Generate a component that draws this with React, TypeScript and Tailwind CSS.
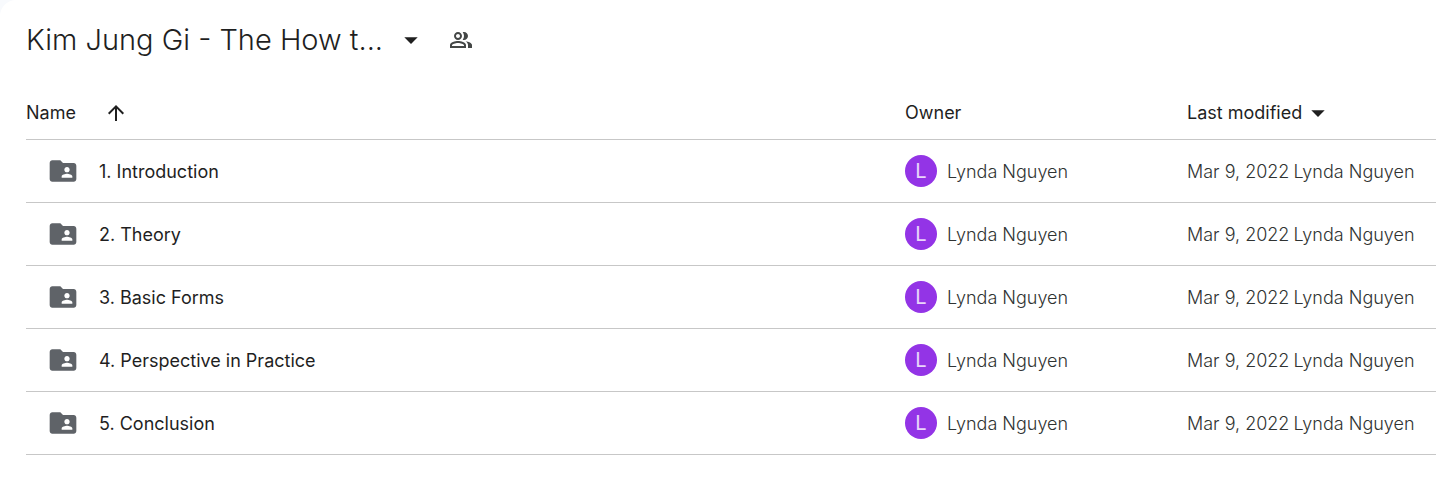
import { MdArrowDropDown, MdArrowUpward, MdFolderShared } from 'react-icons/md'

type Folder = {
  name: string
  owner: string
  modified: string
}

const folders: Folder[] = [
  { name: '1. Introduction', owner: 'Lynda Nguyen', modified: 'Mar 9, 2022' },
  { name: '2. Theory', owner: 'Lynda Nguyen', modified: 'Mar 9, 2022' },
  { name: '3. Basic Forms', owner: 'Lynda Nguyen', modified: 'Mar 9, 2022' },
  { name: '4. Perspective in Practice', owner: 'Lynda Nguyen', modified: 'Mar 9, 2022' },
  { name: '5. Conclusion', owner: 'Lynda Nguyen', modified: 'Mar 9, 2022' },
]

function PeopleIcon() {
  return (
    <svg className="w-6 h-6" viewBox="0 0 24 24" fill="currentColor" aria-hidden="true">
      <path d="M15 8c0-1.42-.5-2.73-1.33-3.76.42-.14.86-.24 1.33-.24 2.21 0 4 1.79 4 4s-1.79 4-4 4c-.43 0-.84-.09-1.23-.21-.03-.01-.06-.02-.1-.03A5.98 5.98 0 0 0 15 8zm1.66 5.13C18.03 14.06 19 15.32 19 17v3h4v-3c0-2.18-3.58-3.47-6.34-3.87zM9 6c-1.1 0-2 .9-2 2s.9 2 2 2 2-.9 2-2-.9-2-2-2zm0 9c-2.7 0-5.8 1.29-6 2.01V18h12v-1c-.2-.71-3.3-2-6-2zM9 4c2.21 0 4 1.79 4 4s-1.79 4-4 4-4-1.79-4-4 1.79-4 4-4zm0 9c2.67 0 8 1.34 8 4v3H1v-3c0-2.66 5.33-4 8-4z" />
    </svg>
  )
}

export default function App() {
  return (
    <div className="min-h-screen bg-[#f8fafd] font-['Inter',sans-serif]">
      <main className="min-h-screen rounded-tl-2xl bg-white pl-[26px] pt-4 text-[#1f1f1f]">
        {/* Folder title + sharing */}
        <div className="flex items-center h-12">
          <button className="flex items-center gap-2 text-[29px] leading-10 font-[350]">
            <h1 className="min-w-[361px] pb-px text-left whitespace-nowrap">Kim Jung Gi - The How t...</h1>
            <MdArrowDropDown className="w-8 h-8" aria-hidden="true" />
          </button>
          <button className="ml-[22px] text-[#444746]" aria-label="Manage access">
            <PeopleIcon />
          </button>
        </div>

        {/* File list */}
        <table className="mt-[22px] w-full table-fixed border-collapse text-left text-lg">
          <thead>
            <tr className="h-[53px] border-b border-[#c7c7c7]">
              <th className="pt-0.5 font-normal">
                <button className="flex items-center gap-7">
                  Name
                  <MdArrowUpward className="w-6 h-6" aria-hidden="true" />
                </button>
              </th>
              <th className="w-[282px] pt-0.5 font-normal">Owner</th>
              <th className="w-[249px] pt-0.5 font-normal">
                <button className="flex items-center">
                  Last modified
                  <MdArrowDropDown className="w-8 h-8" aria-hidden="true" />
                </button>
              </th>
            </tr>
          </thead>
          <tbody>
            {folders.map(f => (
              <tr key={f.name} className="h-[63px] border-b border-[#c7c7c7]">
                <td>
                  <div className="flex items-center gap-5 pl-[21px]">
                    <MdFolderShared className="w-8 h-8 shrink-0 text-[#5f6368]" aria-hidden="true" />
                    <a href="#" className="truncate pt-0.5">{f.name}</a>
                  </div>
                </td>
                <td>
                  <div className="flex items-center gap-[10px] font-light text-[#303332]">
                    <span className="flex w-8 h-8 shrink-0 items-center justify-center rounded-full bg-[#9334e6] text-xl font-normal text-white/80">
                      {f.owner[0]}
                    </span>
                    <span className="pt-0.5">{f.owner}</span>
                  </div>
                </td>
                <td>
                  <div className="flex gap-1 pt-0.5 whitespace-nowrap font-light text-[#303332]">
                    <span>{f.modified}</span>
                    <span>{f.owner}</span>
                  </div>
                </td>
              </tr>
            ))}
          </tbody>
        </table>
      </main>
    </div>
  )
}
